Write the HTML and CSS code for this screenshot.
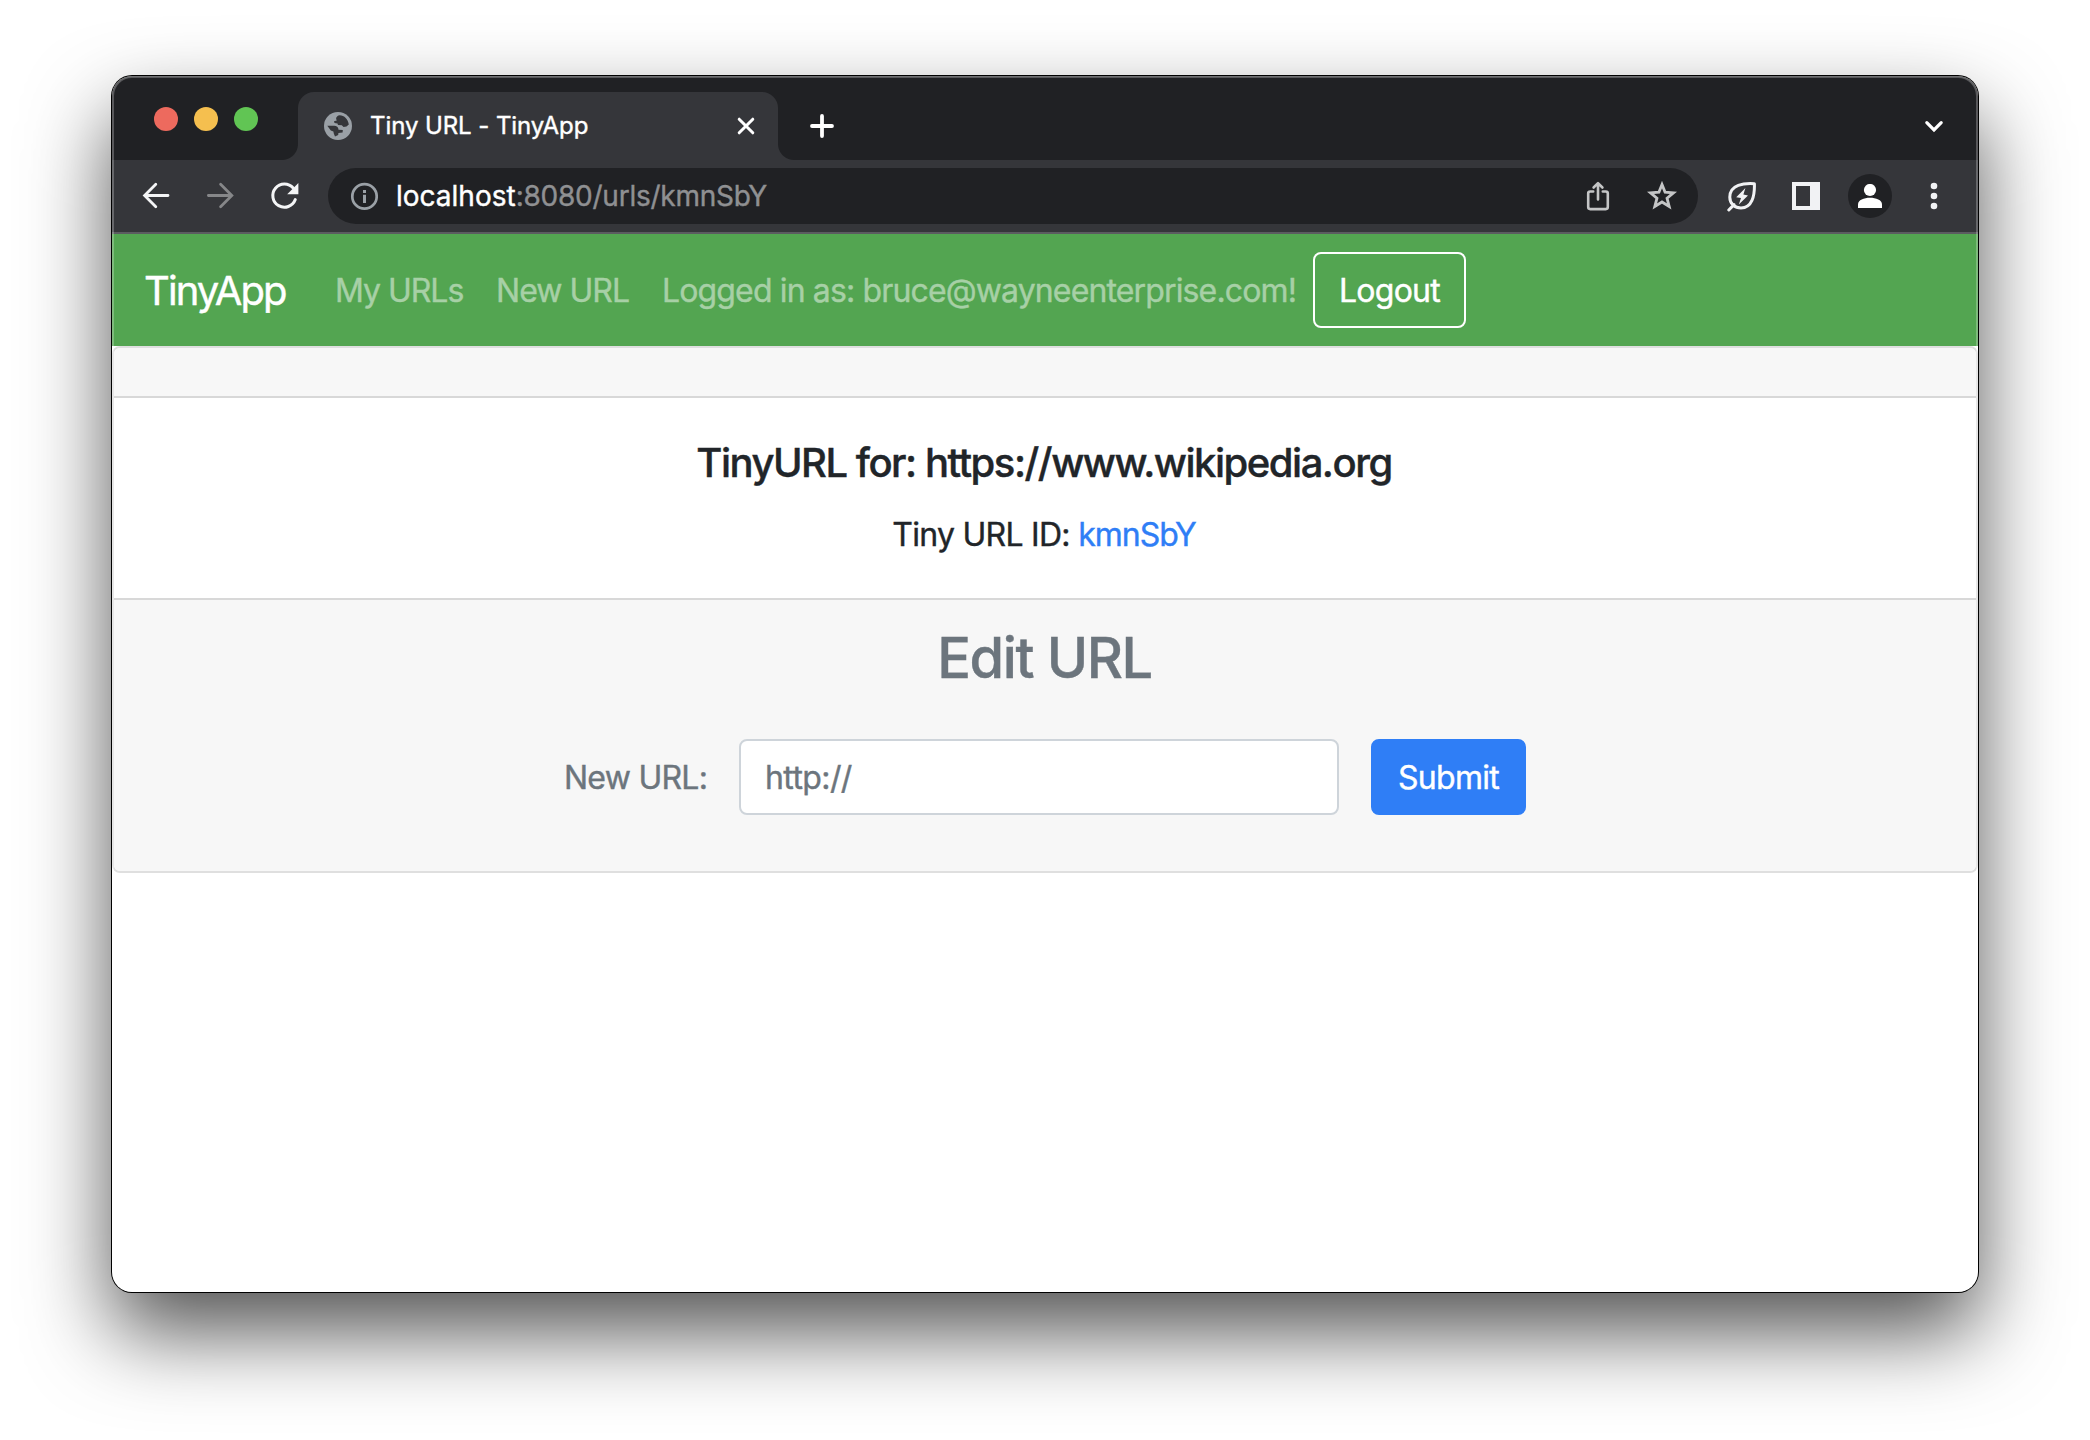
FILE: index.html
```html
<!DOCTYPE html>
<html lang="en">
<head>
<meta charset="utf-8">
<title>Tiny URL - TinyApp</title>
<link rel="stylesheet" href="styles.css">
</head>
<body>
<div class="window">
  <header class="tab-strip">
    <div class="lights"><span class="light red"></span><span class="light yellow"></span><span class="light green"></span></div>
    <div class="tab">
      <svg class="favicon" width="28" height="28" viewBox="6 6 28 28"><circle cx="20" cy="20" r="14" fill="#9aa0a6"/><path fill="#35363a" d="M16 15.2 18.8 14.4C17.4 12.4 18.5 10 21.5 9.3 26.5 9.6 30 13 30.8 18.4L28.5 20.6 25.5 21 23.8 19.2 20 19 19.5 17.4 16.5 17ZM9.3 19.8H16.2C18.6 19.8 20.5 21.3 20.5 23.8L24.8 24 24.6 26.6 20.4 27 20.2 29 17 30.4 15.8 27.5 15.4 25.4 12.8 24.6Z"/></svg>
      <span class="tab-title">Tiny URL - TinyApp</span>
      <svg class="tab-close" width="18" height="18" viewBox="0 0 18 18" fill="none" stroke="#fff" stroke-width="3" stroke-linecap="round"><path d="M2.2 2.2 15.8 15.8M15.8 2.2 2.2 15.8"/></svg>
    </div>
    <svg class="new-tab" width="24" height="24" viewBox="0 0 24 24" fill="none" stroke="#fff" stroke-width="3.8" stroke-linecap="round"><path d="M12 2V22M2 12H22"/></svg>
    <svg class="tab-search" width="20" height="14" viewBox="0 0 20 14" fill="none" stroke="#fff" stroke-width="3.2" stroke-linecap="round"><path d="M2.8 2.7 10 9.9 17.2 2.7"/></svg>
  </header>
  <div class="toolbar">
    <span class="slot"><svg width="32" height="32" viewBox="0 0 32 32" fill="none" stroke="#f4f5f6" stroke-width="2.8" stroke-linecap="round"><path d="M28 15.5H5M15.8 4.3 4.6 15.5 15.8 26.7"/></svg></span>
    <span class="slot"><svg width="32" height="32" viewBox="0 0 32 32" fill="none" stroke="#868789" stroke-width="2.8" stroke-linecap="round"><path d="M4.4 15.5H27.4M16.6 4.3 27.8 15.5 16.6 26.7"/></svg></span>
    <span class="slot"><svg width="32" height="32" viewBox="0 0 32 32"><path d="M27.3 19.6A11.6 11.6 0 1 1 25.2 8" fill="none" stroke="#f4f5f6" stroke-width="3" stroke-linecap="round"/><path d="M30.4 3V14.2H19.2Z" fill="#f4f5f6"/></svg></span>
    <div class="omnibox">
      <svg class="info" width="28" height="28" viewBox="0 0 28 28"><circle cx="14.5" cy="14.4" r="12.2" fill="none" stroke="#9aa0a6" stroke-width="2.7"/><path fill="#9aa0a6" d="M13 8h3v3h-3zM13 12.8h3v8.2h-3z"/></svg>
      <span class="url">localhost<span class="url-path">:8080/urls/kmnSbY</span></span>
      <svg class="share" width="32" height="32" viewBox="0 0 32 32" fill="none" stroke="#c4c5c6" stroke-width="2.6" stroke-linecap="round" stroke-linejoin="round"><path d="M11.2 11.5H8.2Q6.2 11.5 6.2 13.5V27.1Q6.2 29.1 8.2 29.1H23.8Q25.8 29.1 25.8 27.1V13.5Q25.8 11.5 23.8 11.5H20.8M16 19.5V3.5M11.6 7.5 16 3.1 20.4 7.5"/></svg>
      <svg class="star" width="32" height="32" viewBox="0 0 32 32" fill="none" stroke="#c4c5c6" stroke-width="2.6"><path d="M16 5.2 18.8 12.2 26.4 12.8 20.6 17.7 22.5 25.1 16 21.1 9.5 25.1 11.4 17.7 5.6 12.8 13.2 12.2Z" transform="translate(-1.6 -1.2) scale(1.1)"/></svg>
    </div>
    <span class="slot"><svg width="32" height="32" viewBox="0 0 32 32" fill="none" stroke="#f1f2f4" stroke-width="3"><path d="M28.4 3.7C18 3 4 4.5 3.8 17 3.7 24 9 28 15 28 26 28 28.8 16 28.4 3.7ZM2.8 30 8 24.6" stroke-linejoin="round" stroke-linecap="round"/><path d="M19.4 8 10.2 17.2 15 18 12.8 24.4 22 15.4 17.4 14.4Z" fill="#f1f2f4" stroke="none"/></svg></span>
    <span class="slot"><svg width="28" height="28" viewBox="0 0 28 28"><path fill="#f1f2f4" fill-rule="evenodd" d="M0 0H28V28H0ZM4 4V24H18V4Z"/></svg></span>
    <span class="slot"><span class="avatar"><svg width="24" height="24" viewBox="0 0 24 24" fill="#fff"><circle cx="12" cy="6" r="6.1"/><path d="M0 24V20.5C0 16 6 13.8 12 13.8S24 16 24 20.5V24Z"/></svg></span></span>
    <span class="slot"><svg width="8" height="28" viewBox="0 0 8 28" fill="#f1f2f4"><circle cx="4" cy="4" r="3.3"/><circle cx="4" cy="14" r="3.3"/><circle cx="4" cy="24" r="3.3"/></svg></span>
  </div>
  <nav class="navbar">
    <a class="brand">TinyApp</a>
    <a class="nav-link my-urls">My URLs</a>
    <a class="nav-link new-url">New URL</a>
    <span class="nav-link user">Logged in as: bruce@wayneenterprise.com!</span>
    <button class="btn logout">Logout</button>
  </nav>
  <main class="card">
    <div class="card-header"></div>
    <div class="card-body">
      <h5 class="card-title">TinyURL for: https://www.wikipedia.org</h5>
      <p class="card-text">Tiny URL ID: <a class="link">kmnSbY</a></p>
    </div>
    <div class="card-footer">
      <h3 class="edit-title">Edit URL</h3>
      <form class="edit-form">
        <label class="label" for="long-url">New URL:</label>
        <input class="input" id="long-url" type="text" placeholder="http://">
        <button class="btn submit" type="button">Submit</button>
      </form>
    </div>
  </main>
</div>
</body>
</html>
```
FILE: styles.css
```css
* { box-sizing: border-box; }
body {
  margin: 0;
  height: 1440px;
  padding: 76px 112px 148px;
  overflow: hidden;
  background: #fff;
  color: #212529;
  font: 32px/1.5 Inter, "Liberation Sans", sans-serif;
  -webkit-text-stroke: .4px;
}
svg { display: block; flex: none; }
.window {
  position: relative;
  height: 1216px;
  border-radius: 20px;
  overflow: hidden;
  background: #fff;
  box-shadow: 0 0 0 1px #000, 0 40px 84px rgba(0, 0, 0, .68);
}
/* thin highlight along the window frame */
.window::after {
  content: "";
  position: absolute;
  inset: 0;
  border-radius: 20px;
  box-shadow: inset 0 0 0 2px rgba(255, 255, 255, .25), inset 0 1px 0 rgba(255, 255, 255, .15);
  pointer-events: none;
}

.tab-strip {
  display: flex;
  height: 84px;
  padding: 16px 34px 0 42px;
  background: #202124;
}
.lights { display: flex; gap: 16px; width: 144px; padding-top: 15px; }
.light { width: 24px; height: 24px; border-radius: 50%; }
.red { background: #ed6a5e; }
.yellow { background: #f5bf4f; }
.green { background: #61c554; }
.tab {
  position: relative;
  display: flex;
  align-items: center;
  width: 480px;
  height: 68px;
  padding: 0 23px 0 26px;
  border-radius: 16px 16px 0 0;
  background: #35363a;
}
/* flared feet of the active tab */
.tab::before,
.tab::after {
  content: "";
  position: absolute;
  bottom: 0;
  width: 16px;
  height: 16px;
}
.tab::before { left: -16px; background: radial-gradient(circle at 0 0, transparent 15.5px, #35363a 16.5px); }
.tab::after { right: -16px; background: radial-gradient(circle at 100% 0, transparent 15.5px, #35363a 16.5px); }
.tab-title {
  margin-left: 18px;
  color: #fff;
  font-size: 24px;
  letter-spacing: -.08px;
}
.tab-close { margin-left: auto; }
.new-tab { margin: 22px 0 0 32px; }
.tab-search { margin: 28px 0 0 auto; }

.toolbar {
  display: flex;
  align-items: center;
  height: 74px;
  padding: 0 12px;
  border-bottom: 2px solid #5b5c60;
  background: #35363a;
}
.slot { display: flex; flex: none; align-items: center; justify-content: center; width: 64px; height: 72px; }
.omnibox {
  display: flex;
  flex: 1;
  align-items: center;
  height: 56px;
  margin: 0 12px;
  padding: 0 20px 0 22px;
  border-radius: 28px;
  background: #202124;
}
.url { margin-left: 18px; color: #fff; font-size: 28px; line-height: 56px; }
.url-path { color: #8f9092; letter-spacing: -.24px; }
.share { margin-left: auto; }
.star { margin-left: 32px; }
.avatar {
  display: flex;
  align-items: center;
  justify-content: center;
  width: 44px;
  height: 44px;
  border-radius: 50%;
  background: #202124;
}

.navbar {
  display: flex;
  align-items: center;
  height: 112px;
  padding: 0 32px;
  background: #53a551;
  white-space: nowrap;
}
.brand { width: 143px; margin-right: 32px; padding-top: 2px; color: #fff; font-size: 40px; letter-spacing: -1.9px; }
.nav-link { padding: 2px 0 0 16px; color: #a7d0a6; }
.my-urls { width: 161px; letter-spacing: -1.02px; }
.new-url { width: 166px; letter-spacing: -.97px; }
.user { width: 667px; letter-spacing: -.86px; }
.btn {
  height: 76px;
  padding: 2px 0 0;
  border: 2px solid;
  border-radius: 8px;
  color: #fff;
  font: inherit;
  line-height: 70px;
  letter-spacing: -.72px;
}
.logout { width: 153px; border-color: #fff; background: transparent; }

.card { border: 2px solid #dfdfdf; border-radius: 8px; overflow: hidden; text-align: center; }
.card-header { height: 50px; border-bottom: 2px solid #d8d8d8; background: #f7f7f7; }
.card-body { height: 200px; padding: 41px 42px 0 40px; }
.card-title { margin: 0 0 24px; font-size: 40px; font-weight: 500; line-height: 48px; letter-spacing: -1.49px; }
.card-text { margin: 0; line-height: 48px; letter-spacing: -.72px; }
.link { color: #2f7ef6; letter-spacing: -1px; }
.card-footer { height: 273px; padding-top: 25px; border-top: 2px solid #d8d8d8; background: #f7f7f7; color: #6c757d; }
.edit-title { margin: 0 0 47px; padding-right: 1px; font-size: 56px; font-weight: 500; line-height: 67px; letter-spacing: -1.4px; }
.edit-form { display: flex; align-items: center; justify-content: center; gap: 32px; }
.label { width: 143px; padding-top: 2px; text-align: left; white-space: nowrap; letter-spacing: -.75px; }
.input {
  width: 600px;
  height: 76px;
  padding: 0 24px;
  border: 2px solid #ced4da;
  border-radius: 8px;
  background: #fff;
  color: #495057;
  font: inherit;
  letter-spacing: -.6px;
}
.input::placeholder { color: #6c757d; opacity: 1; }
.submit { width: 155px; border-color: #2f7ef6; background: #2f7ef6; }
```
